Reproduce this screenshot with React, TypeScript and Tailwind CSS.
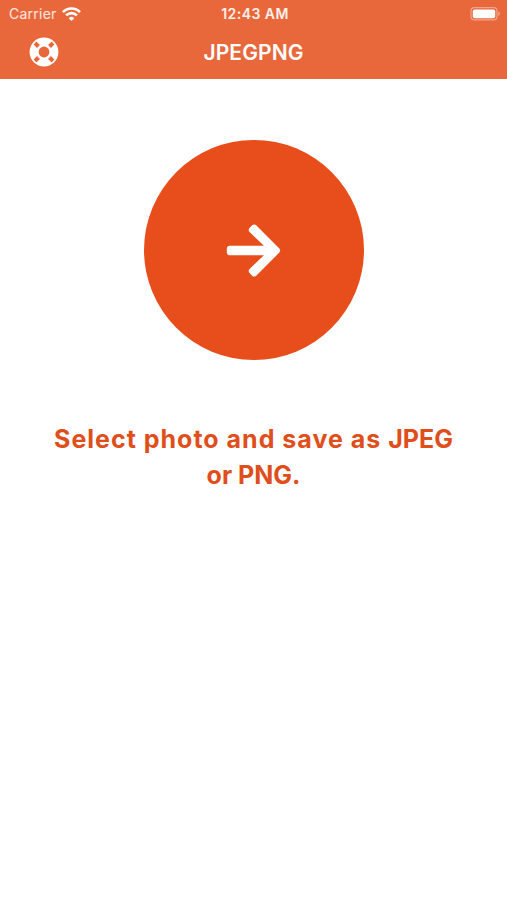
import React from 'react'
import { FaArrowRight } from 'react-icons/fa'

function WifiIcon() {
  return (
    <svg width="19" height="14" viewBox="0 0 19 14" fill="none" stroke="white" strokeWidth="2.6">
      <path d="M1 5.1a12 12 0 0 1 17 0" />
      <path d="M4.1 8.4a7.6 7.6 0 0 1 10.8 0" />
      <path d="M9.5 14 6.7 11.2a4 4 0 0 1 5.6 0Z" fill="white" stroke="none" />
    </svg>
  )
}

function BatteryIcon() {
  return (
    <svg width="31" height="14" viewBox="0 0 31 14">
      <rect x="1" y="0.7" width="26" height="12.2" rx="3.4" fill="none" stroke="white" strokeOpacity="0.4" strokeWidth="1.2" />
      <rect x="2.8" y="2.4" width="22.4" height="8.9" rx="1.8" fill="white" />
      <path d="M28.4 4.6a2.4 2.4 0 0 1 0 4.4Z" fill="white" fillOpacity="0.45" />
    </svg>
  )
}

function HelpIcon() {
  return (
    <svg width="30" height="30" viewBox="-15 -15 30 30">
      <circle r="14.4" fill="white" />
      <circle r="5.4" fill="#e8683c" />
      <g stroke="#e8683c" strokeWidth="4">
        <path d="M-9-9-5.5-5.5" />
        <path d="M9-9 5.5-5.5" />
        <path d="M-9 9-5.5 5.5" />
        <path d="M9 9 5.5 5.5" />
      </g>
    </svg>
  )
}

function StatusBar() {
  return (
    <div className="grid h-7 grid-cols-3 items-center pl-[9px] pr-[6px] font-['Inter',sans-serif] text-[14px] leading-7">
      <div className="flex items-center gap-[5px]">
        <span className="text-white/85 tracking-[0.25px]">Carrier</span>
        <WifiIcon />
      </div>
      <span className="text-center font-semibold text-white/90 tracking-[0.45px] whitespace-nowrap">12:43 AM</span>
      <div className="flex justify-end">
        <BatteryIcon />
      </div>
    </div>
  )
}

function Header() {
  return (
    <header className="h-[79px] bg-[#e8683c]">
      <StatusBar />
      <div className="grid h-12 grid-cols-3 items-center px-[29px]">
        <button aria-label="Help" className="justify-self-start">
          <HelpIcon />
        </button>
        <h1 className="pt-[2px] text-center font-['Inter',sans-serif] text-[21px] leading-8 font-semibold text-white tracking-[0.1px]">
          JPEGPNG
        </h1>
      </div>
    </header>
  )
}

function App() {
  return (
    <div className="min-h-screen w-full bg-white">
      <Header />
      <main className="flex flex-col items-center pt-[61px]">
        <button aria-label="Select photo" className="flex size-[220px] items-center justify-center rounded-full bg-[#e84e1b]">
          <FaArrowRight className="size-[61px] text-white" />
        </button>
        <p className="mt-[61px] text-center font-['Inter',sans-serif] text-[25px] leading-9 font-bold text-[#e04e1b]">
          <span className="tracking-[1px]">Select photo and save as </span>
          JPEG
          <br />
          or PNG.
        </p>
      </main>
    </div>
  )
}

export default App
